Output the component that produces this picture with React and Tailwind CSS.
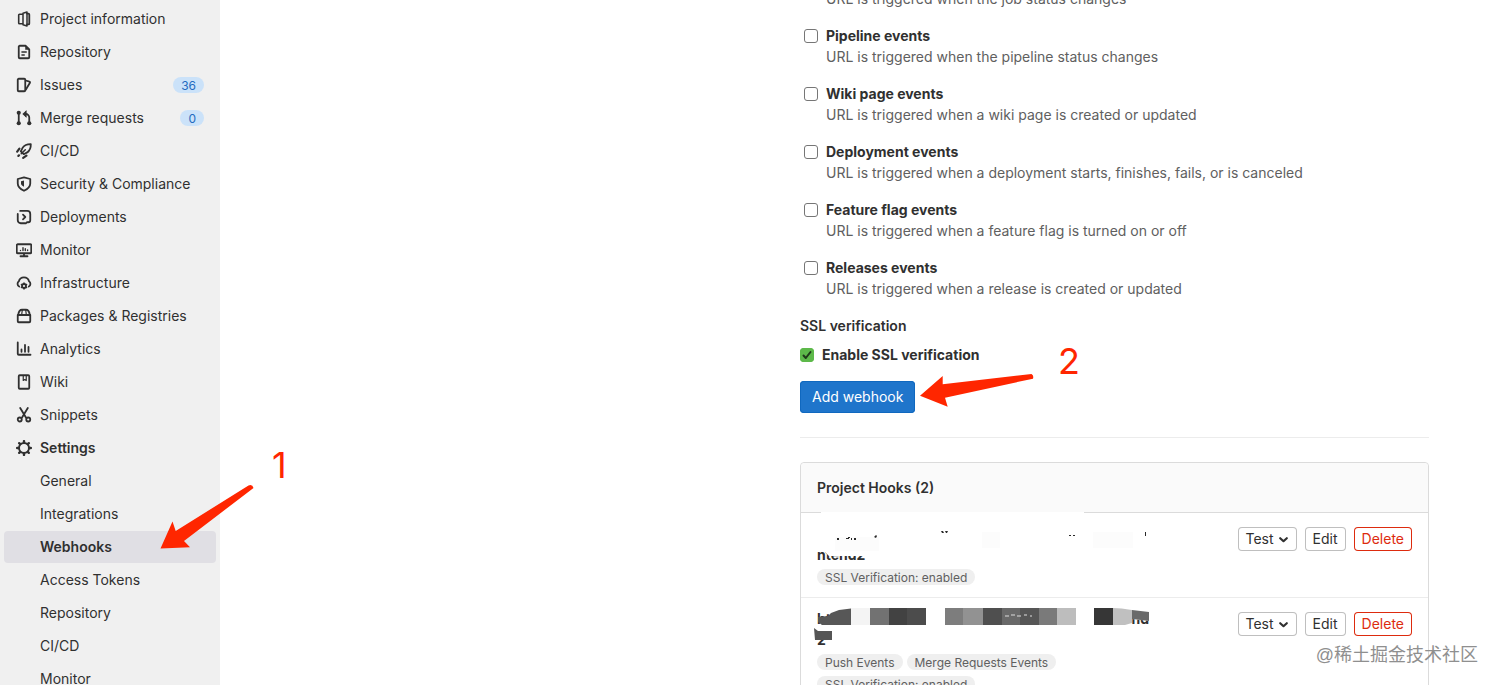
import { useState } from 'react';
import { clsx } from 'clsx';

/* ── Sidebar icons (16px grid) ── */
const Icon = ({ children }) => (
  <svg
    className="w-4 h-4 mr-2 shrink-0"
    viewBox="0 0 16 16"
    fill="none"
    stroke="currentColor"
    strokeWidth="1.8"
    strokeLinecap="round"
    strokeLinejoin="round"
    aria-hidden="true"
  >
    {children}
  </svg>
);

const icons = {
  project: (
    <>
      <path d="M6.5 3.2H3.500a.8.8 0 0 0-.8.8v8a.8.8 0 0 0 .8.8H6.500" strokeWidth="1.600" />
      <path d="M11 2.600h1.300a1 1 0 0 1 1 1v8.800a1 1 0 0 1-1 1H11" />
      <path d="M7 2.200 11 1v14l-4-1.200z" strokeWidth="1.500" />
    </>
  ),
  doc: (
    <>
      <path d="M2.750 2.750v10.500a1 1 0 0 0 1 1h8.500a1 1 0 0 0 1-1V5.500L9.500 1.750H3.750a1 1 0 0 0-1 1z" />
      <path d="M6 8h4.200M6 11h2.200" strokeWidth="1.600" />
      <path d="M9.500 2v3.500H13z" fill="currentColor" strokeWidth="0.500" />
    </>
  ),
  issues: (
    <>
      <path d="M2.750 1.750h5.500a1 1 0 0 1 1 1v10.500a1 1 0 0 1-1 1h-5.500a1 1 0 0 1-1-1V2.750a1 1 0 0 1 1-1z" />
      <path d="m9.750 3.500 3.700 1.200a.8.8 0 0 1 .5 1.100L9.750 12.800" />
    </>
  ),
  merge: (
    <>
      <path d="M2.750 3v10M13.250 13V7.500a3.500 3.500 0 0 0-3.500-3.500H8.500" />
      <path d="M10 1 6.800 4 10 7z" fill="currentColor" strokeWidth="0.800" />
      <g fill="currentColor" stroke="none">
        <circle cx="2.750" cy="2.750" r="2.100" />
        <circle cx="2.750" cy="13.250" r="2.100" />
        <circle cx="13.250" cy="13.250" r="2.100" />
      </g>
    </>
  ),
  rocket: (
    <>
      <path d="M14.800 1.200c-3.600-.1-6.300 1-8.200 3.600L4.800 8.300l2.900 2.900 3.500-1.800c2.600-1.900 3.700-4.600 3.600-8.200z" />
      <path d="M9.300 6.700 5.200 10.800" strokeWidth="1.500" />
      <path d="M3.400 5.600 1.200 8.600M10.400 12.600l-3.200 2.200M3 12.300l-.6.6" strokeWidth="2.200" />
    </>
  ),
  shield: (
    <>
      <path d="M8 1.400 1.750 3v4.500c0 3.200 2.500 5.500 6.250 7.300 3.750-1.800 6.250-4.100 6.250-7.300V3z" />
      <path d="M8 4.500v6.200C6.200 9.700 5 8.800 5 7.400V5.200z" fill="currentColor" stroke="none" />
    </>
  ),
  deployments: (
    <>
      <path d="M4.200 1.900h7.050a3 3 0 0 1 3 3v6.350a2 2 0 0 1-2 2H11M10 14.250H4.750a3 3 0 0 1-3-3V5" />
      <path d="m7 5.700 2.300 2.300L7 10.300" />
    </>
  ),
  monitor: (
    <>
      <path d="M1.750 2.250h12.500a1 1 0 0 1 1 1v7a1 1 0 0 1-1 1H1.750a1 1 0 0 1-1-1v-7a1 1 0 0 1 1-1zM4.500 14.250h7M8 11.500v2.500" />
      <path d="M4.500 8.400v.1M7 5.700v2.800M9.300 6.800v1.700M11.600 8v.5" strokeWidth="1.400" />
    </>
  ),
  cloud: (
    <>
      <path d="M3.200 11.500A3 3 0 0 1 2.900 6.300 5.200 5.200 0 0 1 13 6.300a3 3 0 0 1-.2 5.200" />
      <circle cx="8" cy="11" r="2" />
      <path d="M8 8v.8M8 13.200v.8M5.400 9.500l.7.400M9.900 12.100l.7.400M5.400 12.500l.7-.4M9.900 9.900l.7-.4" strokeWidth="1.500" />
    </>
  ),
  package: (
    <>
      <path d="M1.750 7h12.500v6.250a1 1 0 0 1-1 1H2.750a1 1 0 0 1-1-1z" />
      <path d="M2.200 6.800C2.700 3.500 4 1.750 6 1.750h4c2 0 3.300 1.750 3.800 5.050" />
      <path d="M6.300 2 5.700 6.500M9.700 2l.6 4.500" strokeWidth="1.200" />
    </>
  ),
  chart: (
    <>
      <path d="M1.750 1.500v11.250a1 1 0 0 0 1 1H14.500" />
      <path d="M5.500 8.500v2.250M9 4v6.750M12.500 6v4.750" />
    </>
  ),
  book: (
    <>
      <path d="M3.750 1.250h8.500a1 1 0 0 1 1 1v11.500a1 1 0 0 1-1 1h-8.500a1 1 0 0 1-1-1V2.250a1 1 0 0 1 1-1z" />
      <path d="M7.250 1.500v5l1.500-1 1.500 1v-5" strokeWidth="1.200" />
    </>
  ),
  scissors: (
    <>
      <path d="m4.200 1 5.900 9.800M11.800 1 5.900 10.800" />
      <circle cx="3.750" cy="12.500" r="2" />
      <circle cx="12.250" cy="12.500" r="2" />
    </>
  ),
  gear: (
    <>
      <circle cx="8" cy="8" r="5" strokeWidth="2" />
      <path
        d="M8 1.100v1.500M8 13.400v1.500M1.100 8h1.500M13.400 8h1.500M3.200 3.200l1 1M11.800 11.800l1 1M3.200 12.800l1-1M11.800 4.200l1-1"
        strokeWidth="2.400"
      />
    </>
  ),
};

const navItems = [
  { label: 'Project information', icon: 'project' },
  { label: 'Repository', icon: 'doc' },
  { label: 'Issues', icon: 'issues', count: 36 },
  { label: 'Merge requests', icon: 'merge', count: 0 },
  { label: 'CI/CD', icon: 'rocket' },
  { label: 'Security & Compliance', icon: 'shield' },
  { label: 'Deployments', icon: 'deployments' },
  { label: 'Monitor', icon: 'monitor' },
  { label: 'Infrastructure', icon: 'cloud' },
  { label: 'Packages & Registries', icon: 'package' },
  { label: 'Analytics', icon: 'chart' },
  { label: 'Wiki', icon: 'book' },
  { label: 'Snippets', icon: 'scissors' },
  { label: 'Settings', icon: 'gear', bold: true },
];

const settingsItems = [
  'General',
  'Integrations',
  'Webhooks',
  'Access Tokens',
  'Repository',
  'CI/CD',
  'Monitor',
];

const events = [
  { id: 'pipeline', title: 'Pipeline events', text: 'URL is triggered when the pipeline status changes' },
  { id: 'wiki', title: 'Wiki page events', text: 'URL is triggered when a wiki page is created or updated' },
  { id: 'deployment', title: 'Deployment events', text: 'URL is triggered when a deployment starts, finishes, fails, or is canceled' },
  { id: 'feature', title: 'Feature flag events', text: 'URL is triggered when a feature flag is turned on or off' },
  { id: 'releases', title: 'Releases events', text: 'URL is triggered when a release is created or updated' },
];

const Sidebar = () => (
  <nav className="w-[220px] shrink-0 bg-[#f0f0f0] px-1 pt-[3px] leading-5">
    <ul className="flex flex-col gap-px">
      {navItems.map(({ label, icon, count, bold }) => (
        <li key={label}>
          <a href="#" className={clsx('flex items-center h-8 px-3 rounded', bold && 'font-semibold')}>
            <Icon>{icons[icon]}</Icon>
            <span className="flex-1">{label}</span>
            {count !== undefined && (
              <span className="h-4 px-2 rounded-full bg-[#cbe2f9] text-[#1f6bc0] text-xs leading-[17px]">
                {count}
              </span>
            )}
          </a>
        </li>
      ))}
      {settingsItems.map((label) => (
        <li key={label}>
          <a
            href="#"
            className={clsx(
              'flex items-center h-8 pl-9 pr-3 rounded',
              label === 'Webhooks' && 'bg-[#e0dfe4] font-semibold'
            )}
          >
            {label}
          </a>
        </li>
      ))}
    </ul>
  </nav>
);

const EventOption = ({ id, title, text }) => (
  <div className="flex pl-1 mb-4">
    <input
      id={id}
      type="checkbox"
      className="appearance-none w-3.5 h-3.5 mt-1 mr-2 shrink-0 rounded-[3px] border border-[#767676] bg-white"
    />
    <div>
      <label htmlFor={id} className="block font-bold">{title}</label>
      <p className="text-[#606060]">{text}</p>
    </div>
  </div>
);

const Tag = ({ children }) => (
  <span className="h-4 px-2 rounded-full bg-[#efefef] text-[#606060] text-xs leading-[17px]">{children}</span>
);

const HookActions = () => (
  <div className="flex gap-2 pt-1 leading-5">
    <button className="flex items-center gap-1 h-6 px-2 rounded ring-1 ring-inset ring-[#bfbfbf]">
      Test
      <svg className="w-[11px] h-[11px]" viewBox="0 0 11 11" fill="none" stroke="currentColor" strokeWidth="2.200" strokeLinecap="round" strokeLinejoin="round" aria-hidden="true">
        <path d="m2.200 4.200 3.300 3 3.300-3" />
      </svg>
    </button>
    <button className="h-6 px-2 rounded ring-1 ring-inset ring-[#bfbfbf]">Edit</button>
    <button className="h-6 px-2 rounded ring-1 ring-inset ring-[#dd2b0e] text-[#dd2b0e]">Delete</button>
  </div>
);

/* White brush strokes over the first hook url */
const BrushedUrl = () => (
  <svg className="absolute left-0 -top-px w-[360px] h-[56px]" viewBox="0 0 360 56" aria-hidden="true">
    <path d="M20 0h263v1H20z" fill="#fff" />
    <path d="M25 24h40v20H28l-3-3z" fill="#fff" />
    <path d="M34 25h44v14H34z M181 20h18v16h-18z M292 20h40v16h-40z" fill="#fcfcfc" />
    <g fill="#2a2a2a">
      <path d="M36 26h2v2h-2zM45 26h2v-1h2v1h-1v1h-3zM50 26h1v2h-1zM53 26h2v2h-2zM73 25l2-2 1 1-1 2z" />
      <path d="M140 19h2l1 2h-2zM144 19h3l-1 2h-1zM268 23h2v1h-2zM272 23h2v1h-2zM344 20h1v4h-1z" />
    </g>
  </svg>
);

const mosaic = [
  [50, 19, '#f4f4f4'],
  [69, 19, '#727272'],
  [88, 18, '#424242'],
  [106, 19, '#4c4c4c'],
  [144, 18, '#7d7d7d'],
  [162, 20, '#929292'],
  [182, 19, '#4f4f4f'],
  [201, 18, '#696969'],
  [219, 19, '#565656'],
  [238, 18, '#7a7a7a'],
  [256, 19, '#bdbdbd'],
  [293, 19, '#363636'],
];

/* Pixel mosaic over the second hook url */
const MosaicUrl = () => (
  <svg className="absolute left-0 top-0 w-[360px] h-[56px]" viewBox="0 0 360 56" aria-hidden="true">
    <path d="M50 10.500 38 12l-8 3-3 3-10 1v5l4 3h29z" fill="#575757" />
    {mosaic.map(([x, w, fill]) => (
      <rect key={x} x={x} y="10" width={w} height="17" fill={fill} />
    ))}
    <path d="M312 10q8 0 19 2v13l-7 2h-12z" fill="#c0c0c0" />
    <path d="M331 10l18 0v13l-9-1-9-1z" fill="#fff" />
    <path d="M331 12l17 2v9l-8-1-9-1z" fill="#6a6a6a" />
    <path d="M204 18h4m2-1h4m2 1h4m3-1h3m3 1h2" stroke="#dedede" fill="none" />
    <path d="M13 30l4 3h14v9H14z" fill="#555" />
  </svg>
);

const HookRow = ({ url, overlay, tags }) => (
  <li className="relative flex justify-between px-4 pt-2.5 pb-3 border-b border-[#ececec]">
    <div>
      <div className="w-[332px] h-[46px] font-bold">{url}</div>
      <div className="relative flex flex-wrap gap-x-1 gap-y-1.5 w-[332px]">
        {tags.map((tag) => <Tag key={tag}>{tag}</Tag>)}
      </div>
    </div>
    {overlay}
    <HookActions />
  </li>
);

const ProjectHooks = () => (
  <section className="border border-[#dbdbdb] rounded">
    <h2 className="h-[50px] px-4 leading-[50px] bg-[#fafafa] border-b border-[#dbdbdb] rounded-t font-semibold">
      Project Hooks (2)
    </h2>
    <ul>
      <HookRow
        url={<span className="block pt-[21px]">ntend2</span>}
        overlay={<BrushedUrl />}
        tags={['SSL Verification: enabled']}
      />
      <HookRow
        url={
          <>
            <span className="flex justify-between"><span>ht</span><span>nd</span></span>
            <span className="block">2</span>
          </>
        }
        overlay={<MosaicUrl />}
        tags={['Push Events', 'Merge Requests Events', 'SSL Verification: enabled']}
      />
    </ul>
  </section>
);

/* ── Red callouts drawn on top of the page ── */
const Callouts = () => (
  <div className="pointer-events-none text-[#ff2600] text-4xl">
    <svg className="absolute left-[160px] top-[484px] w-[94px] h-[66px]" viewBox="0 0 94 66" fill="currentColor" aria-hidden="true">
      <path d="M.5 64.500 12.500 37.500 15.700 47 88.500 1.500Q92.500 0 93.500 4L24 57l6 6.300z" />
    </svg>
    <span className="absolute left-[272px] top-[445px]">1</span>
    <svg className="absolute left-[920px] top-[373px] w-[114px] h-[35px]" viewBox="0 0 114 35" fill="currentColor" aria-hidden="true">
      <path d="M0 22.700 22.700 3v8.300L111.500 1Q114 2.500 113 5.700L25 24.700l2.700 9z" />
    </svg>
    <span className="absolute left-[1058px] top-[341px]">2</span>
  </div>
);

const App = () => {
  const [ssl, setSsl] = useState(true);

  return (
    <div className="relative flex h-screen overflow-hidden bg-white text-[#303030] text-sm leading-[21px] font-['Inter',sans-serif]">
      <Sidebar />

      <main className="flex flex-1 pr-[69px]">
        <div className="w-[580px] shrink-0" />
        <form className="flex-1 min-w-0" onSubmit={(e) => e.preventDefault()}>
          <p className="-mt-3 mb-4 pl-[26px] text-[#606060]">URL is triggered when the job status changes</p>
          {events.map((event) => <EventOption key={event.id} {...event} />)}

          <h3 className="mb-2 font-semibold">SSL verification</h3>
          <div className="flex items-center mb-4">
            <span className="relative flex mr-2">
              <input
                id="ssl"
                type="checkbox"
                checked={ssl}
                onChange={(e) => setSsl(e.target.checked)}
                className="appearance-none w-3.5 h-3.5 rounded-sm bg-white ring-1 ring-inset ring-[#5db94a] checked:bg-[#5db94a]"
              />
              {ssl && (
                <svg className="absolute inset-0 pointer-events-none" viewBox="0 0 14 14" fill="none" stroke="#1f3a1a" strokeWidth="2" strokeLinecap="round" strokeLinejoin="round" aria-hidden="true">
                  <path d="m3.500 7.500 2.300 2.500L10.500 4" />
                </svg>
              )}
            </span>
            <label htmlFor="ssl" className="font-bold">Enable SSL verification</label>
          </div>

          <button className="block h-8 px-3 leading-5 rounded bg-[#1f75cb] ring-1 ring-inset ring-[#1068bf] text-white">
            Add webhook
          </button>
          <hr className="my-6 border-[#ececec]" />
          <ProjectHooks />
        </form>
      </main>

      <Callouts />
      <span className="absolute right-5 bottom-4 text-lg leading-7 text-[#8f8f8f] font-['Liberation_Sans','Noto_Sans_CJK_SC',sans-serif]">
        @稀土掘金技术社区
      </span>
    </div>
  );
};

export default App;
